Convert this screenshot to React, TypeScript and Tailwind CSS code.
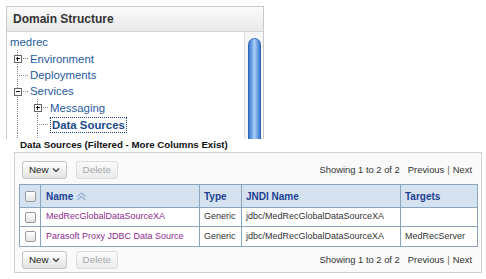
import React from "react";

const F = { fontFamily: '"Liberation Sans", Arial, sans-serif' };

function Gutter({ level, plus, minus }: { level: number; plus?: boolean; minus?: boolean }) {
  const w = level === 1 ? 20 : 40;
  const h = 17;
  const cx = level === 1 ? 7.5 : 27.5;
  return (
    <svg width={w} height={h} className="shrink-0" shapeRendering="crispEdges">
      <line x1={7.5} y1={0} x2={7.5} y2={h} stroke="#8a8a8a" strokeDasharray="1 1" />
      {level === 2 && <line x1={27.5} y1={0} x2={27.5} y2={h} stroke="#8a8a8a" strokeDasharray="1 1" />}
      <line x1={cx + 1} y1={8.5} x2={w - 1} y2={8.5} stroke="#8a8a8a" strokeDasharray="1 1" />
      {(plus || minus) && (
        <g>
          <rect x={cx - 3.5} y={5} width={7} height={7} fill="#fff" stroke="#666" />
          <line x1={cx - 2} y1={8.5} x2={cx + 2} y2={8.5} stroke="#111" />
          {plus && <line x1={cx} y1={6.5} x2={cx} y2={10.5} stroke="#111" />}
        </g>
      )}
    </svg>
  );
}

function Btn({ children, disabled }: { children: React.ReactNode; disabled?: boolean }) {
  return (
    <div
      className={`h-[18px] px-[6px] flex items-center rounded-[3px] border text-[9.8px] ${
        disabled
          ? "border-[#dcdcdc] text-[#a8a8a8] bg-gradient-to-b from-[#fafafa] to-[#ececec]"
          : "border-[#c4c4c4] text-[#222] bg-gradient-to-b from-white to-[#e4e4e4]"
      }`}
    >
      {children}
    </div>
  );
}

function Toolbar() {
  return (
    <div className="flex items-center justify-between h-[18px]">
      <div className="flex items-center gap-[9px]">
        <Btn>
          <span>New</span>
          <svg width="8" height="6" className="ml-[3px]" viewBox="0 0 8 6">
            <path d="M1 1.5 L4 4.5 L7 1.5" fill="none" stroke="#333" strokeWidth="1.2" />
          </svg>
        </Btn>
        <Btn disabled>Delete</Btn>
      </div>
      <div className="text-[9.4px] text-[#333] flex items-center">
        <span>Showing 1 to 2 of 2</span>
        <span className="ml-[8px]">Previous</span>
        <span className="mx-[3px] text-[#666]">|</span>
        <span>Next</span>
      </div>
    </div>
  );
}

function Check() {
  return <div className="w-[11px] h-[11px] rounded-[2px] border border-[#9a9a9a] bg-gradient-to-b from-white to-[#e4e4e4]" />;
}

const td = "border border-[#8ba4bd] pl-[4px] whitespace-nowrap overflow-hidden";
const th = "border border-[#8ba4bd] text-left pl-[4px] font-bold text-[10px] whitespace-nowrap";

export default function App() {
  return (
    <div className="w-[486px] h-[279px] bg-white overflow-hidden" style={F}>
      {/* Top panel */}
      <div className="ml-[6px] mt-[6px] w-[258px] h-[133px] border-l border-t border-r border-[#c9c9c9] flex flex-col overflow-hidden">
        <div className="h-[25px] shrink-0 bg-gradient-to-b from-[#fbfbfb] to-[#e9e9e9] border-b border-[#d4d4d4] flex items-center pl-[6px]">
          <span className="text-[12px] font-bold text-[#333]">Domain Structure</span>
        </div>
        <div className="flex flex-1">
          <div className="flex-1 pl-[3px] pt-[2px] text-[11.4px] text-[#1f5a9e] leading-[16px]">
            <div className="h-[16px] flex items-center">medrec</div>
            <div className="flex items-center h-[17px]">
              <Gutter level={1} plus />
              <span>Environment</span>
            </div>
            <div className="flex items-center h-[16px]">
              <Gutter level={1} />
              <span>Deployments</span>
            </div>
            <div className="flex items-center h-[16px]">
              <Gutter level={1} minus />
              <span>Services</span>
            </div>
            <div className="flex items-center h-[17px]">
              <Gutter level={2} plus />
              <span>Messaging</span>
            </div>
            <div className="flex items-center h-[17px]">
              <Gutter level={2} />
              <span className="font-bold text-[#1a4a8a] border border-dotted border-[#1e3f7a] px-[1px] leading-[14px]">Data Sources</span>
            </div>
            <div className="flex items-center h-[16px]">
              <Gutter level={2} />
            </div>
          </div>
          <div className="w-[19px] shrink-0 bg-[#f6f6f6] border-l border-[#e2e2e2] pt-[6px] flex justify-center">
            <div className="w-[13px] h-[200px] rounded-t-[7px] bg-gradient-to-r from-[#3a78d0] via-[#a8cff7] to-[#3a78d0] border border-[#2c66b8]" />
          </div>
        </div>
      </div>

      {/* Heading */}
      <div className="ml-[20px] h-[12px] flex items-center text-[9.7px] font-bold text-[#111]">
        Data Sources (Filtered - More Columns Exist)
      </div>

      {/* Lower panel */}
      <div className="ml-[14px] mt-[1px] w-[468px] h-[121px] border border-[#d2d2d2] bg-[#fafafa] px-[4px] pt-[8px]">
        <div className="pl-[3px] pr-[5px]">
          <Toolbar />
        </div>
        <table className="mt-[5px] w-[458px] table-fixed border-collapse text-[9px] text-[#333]">
          <colgroup>
            <col className="w-[21px]" />
            <col className="w-[159px]" />
            <col className="w-[42px]" />
            <col className="w-[159px]" />
            <col className="w-[77px]" />
          </colgroup>
          <thead>
            <tr className="h-[23px] bg-[#d5e3f1] text-[#1c3f94]">
              <th className="border border-[#8ba4bd] p-0">
                <div className="flex justify-center"><Check /></div>
              </th>
              <th className={th + " pl-[5px]"}>
                <span className="inline-flex items-center">
                  Name
                  <svg width="11" height="9" viewBox="0 0 11 9" className="ml-[3px]">
                    <path d="M1.5 4.5 L5.5 1 L9.5 4.5 M1.5 8 L5.5 4.5 L9.5 8" fill="none" stroke="#9ab0cf" strokeWidth="1.3" />
                  </svg>
                </span>
              </th>
              <th className={th}>Type</th>
              <th className={th}>JNDI Name</th>
              <th className={th}>Targets</th>
            </tr>
          </thead>
          <tbody className="bg-white">
            <tr className="h-[19px]">
              <td className="border border-[#8ba4bd] p-0"><div className="flex justify-center"><Check /></div></td>
              <td className={td + " pl-[5px] text-[#8e2a8e]"}>MedRecGlobalDataSourceXA</td>
              <td className={td}>Generic</td>
              <td className={td}>jdbc/MedRecGlobalDataSourceXA</td>
              <td className={td}></td>
            </tr>
            <tr className="h-[20px]">
              <td className="border border-[#8ba4bd] p-0"><div className="flex justify-center"><Check /></div></td>
              <td className={td + " pl-[5px] text-[#8e2a8e]"}>Parasoft Proxy JDBC Data Source</td>
              <td className={td}>Generic</td>
              <td className={td}>jdbc/MedRecGlobalDataSourceXA</td>
              <td className={td}>MedRecServer</td>
            </tr>
          </tbody>
        </table>
        <div className="mt-[4px] pl-[3px] pr-[5px]">
          <Toolbar />
        </div>
      </div>
    </div>
  );
}
